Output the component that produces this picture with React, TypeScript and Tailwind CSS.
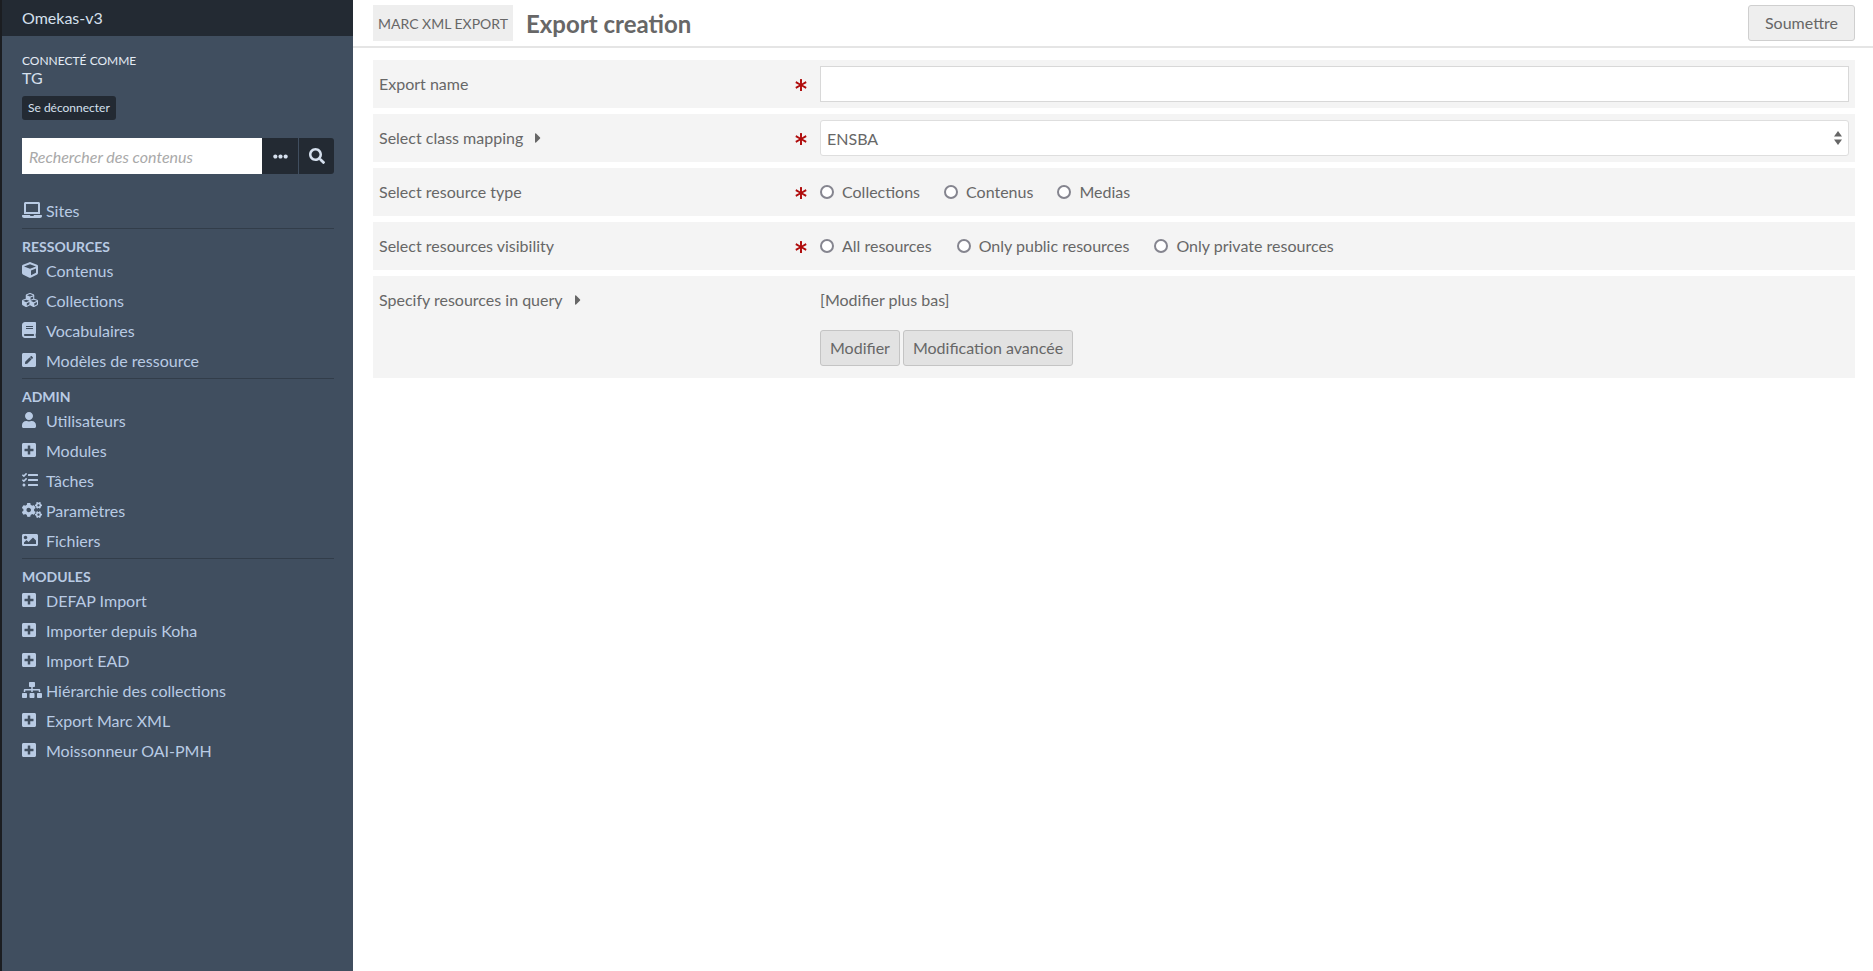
import type { ReactNode } from "react";
import type { IconType } from "react-icons";
import {
  FaAsterisk,
  FaBook,
  FaCaretRight,
  FaCogs,
  FaCube,
  FaCubes,
  FaEllipsisH,
  FaImage,
  FaLaptop,
  FaPenSquare,
  FaPlusSquare,
  FaSearch,
  FaSitemap,
  FaTasks,
  FaUser,
} from "react-icons/fa";

type NavItem = { label: string; icon: IconType; width: string };

const resources: NavItem[] = [
  { label: "Contenus", icon: FaCube, width: "w-4" },
  { label: "Collections", icon: FaCubes, width: "w-4" },
  { label: "Vocabulaires", icon: FaBook, width: "w-[14px]" },
  { label: "Modèles de ressource", icon: FaPenSquare, width: "w-[14px]" },
];

const admin: NavItem[] = [
  { label: "Utilisateurs", icon: FaUser, width: "w-[14px]" },
  { label: "Modules", icon: FaPlusSquare, width: "w-[14px]" },
  { label: "Tâches", icon: FaTasks, width: "w-4" },
  { label: "Paramètres", icon: FaCogs, width: "w-5" },
  { label: "Fichiers", icon: FaImage, width: "w-4" },
];

const modules: NavItem[] = [
  { label: "DEFAP Import", icon: FaPlusSquare, width: "w-[14px]" },
  { label: "Importer depuis Koha", icon: FaPlusSquare, width: "w-[14px]" },
  { label: "Import EAD", icon: FaPlusSquare, width: "w-[14px]" },
  { label: "Hiérarchie des collections", icon: FaSitemap, width: "w-5" },
  { label: "Export Marc XML", icon: FaPlusSquare, width: "w-[14px]" },
  { label: "Moissonneur OAI-PMH", icon: FaPlusSquare, width: "w-[14px]" },
];

function NavRow({ item }: { item: NavItem }) {
  const Icon = item.icon;
  return (
    <a className="flex h-[30px] items-center text-[#b9cbe4]">
      <span className="flex w-6 shrink-0 items-center">
        <Icon className={`h-4 ${item.width}`} />
      </span>
      <span className="pt-px">{item.label}</span>
    </a>
  );
}

function NavSection({ title, items }: { title: string; items: NavItem[] }) {
  return (
    <div className="border-t border-[#323d4a] pt-[6px] pb-[3px]">
      <h4 className="h-5 text-[14px] font-bold leading-[24px] text-[#b9cbe4]">{title}</h4>
      {items.map((item) => (
        <NavRow key={item.label} item={item} />
      ))}
    </div>
  );
}

function Sidebar() {
  return (
    <aside className="flex h-full w-[353px] shrink-0 flex-col border-l-2 border-[#1b1d21] bg-[#404e5f]">
      <div className="flex h-9 shrink-0 items-center bg-[#232a33] pl-5 text-[#d6e0ee]">Omekas-v3</div>
      <div className="px-5">
        <div className="pt-[18px] text-[12px] leading-[14px] text-[#e4ebf5]">CONNECTÉ COMME</div>
        <div className="h-[21px] text-[16px] leading-[20px] text-[#d6e0ee]">TG</div>
        <a className="mt-[7px] inline-flex h-6 items-center rounded-[3px] bg-[#232a33] px-[6px] align-top text-[12px] text-[#d6e0ee]">
          Se déconnecter
        </a>
        <div className="mt-[18px] flex h-9 w-[312px]">
          <input
            readOnly
            placeholder="Rechercher des contenus"
            className="h-9 w-[240px] bg-white px-[7px] text-[16px] italic outline-none placeholder:text-[#a9a9a9]"
          />
          <button className="flex h-9 w-9 items-center justify-center bg-[#232a33] text-[#d6e0ee]">
            <FaEllipsisH size={15} />
          </button>
          <button className="ml-px flex h-9 w-[35px] items-center justify-center rounded-r-[3px] bg-[#232a33] text-[#d6e0ee]">
            <FaSearch size={16} />
          </button>
        </div>
        <nav className="mt-[21px] w-[312px]">
          <div className="pb-[3px]">
            <NavRow item={{ label: "Sites", icon: FaLaptop, width: "w-5" }} />
          </div>
          <NavSection title="RESSOURCES" items={resources} />
          <NavSection title="ADMIN" items={admin} />
          <NavSection title="MODULES" items={modules} />
        </nav>
      </div>
    </aside>
  );
}

function FormRow({
  label,
  caret,
  required,
  tall,
  children,
}: {
  label: string;
  caret?: boolean;
  required?: boolean;
  tall?: boolean;
  children: ReactNode;
}) {
  return (
    <div className={`flex bg-[#f4f4f4] pl-[6px] pr-[6px] ${tall ? "pt-[6px] pb-3" : "h-12 items-center"}`}>
      <div className={`flex w-[416px] shrink-0 items-center ${tall ? "h-9" : ""}`}>
        <label>{label}</label>
        {caret && (
          <span className="ml-3 text-[#676767]">
            <FaCaretRight className="h-4 w-[6px]" />
          </span>
        )}
      </div>
      <div className={`flex w-[25px] shrink-0 text-[#b00c0c] ${tall ? "h-9 items-center" : ""}`}>
        {required && <FaAsterisk size={12} className="mt-[2px]" />}
      </div>
      <div className="min-w-0 flex-1">{children}</div>
    </div>
  );
}

function Radio({ label, gap }: { label: string; gap: string }) {
  return (
    <label className={`flex items-center ${gap}`}>
      <span className="mr-2 h-[14px] w-[14px] rounded-full border-2 border-[#85858f] bg-white" />
      {label}
    </label>
  );
}

export default function App() {
  return (
    <div className="flex h-[971px] w-[1873px] overflow-hidden bg-white font-['Lato',sans-serif] text-[16px] text-[#676767]">
      <Sidebar />
      <main className="min-w-0 flex-1">
        <header className="flex h-[48px] items-center border-b-2 border-[#e5e5e5] pl-5 pr-[18px]">
          <div className="flex h-9 w-[140px] items-center justify-center bg-[#eeeeee] text-[14px]">MARC XML EXPORT</div>
          <h1 className="ml-[13px] mt-px text-[24px] font-bold">Export creation</h1>
          <button className="ml-auto h-9 w-[107px] rounded-[3px] border border-[#cfcfcf] bg-[#eeeeee]">Soumettre</button>
        </header>
        <div className="flex w-[1502px] flex-col gap-[6px] pl-5 pt-3">
          <FormRow label="Export name" required>
            <input readOnly className="block h-9 w-full border border-[#d8d8d8] bg-white px-[6px] outline-none" />
          </FormRow>
          <FormRow label="Select class mapping" caret required>
            <div className="relative flex h-9 items-center rounded-[3px] border border-[#dedede] bg-white px-[6px] pt-[2px]">
              ENSBA
              <svg className="absolute right-[6px] top-[10px]" width="8" height="14" viewBox="0 0 8 14" fill="#666666">
                <path d="M4 0 8 5.500H0z" />
                <path d="M0 8.500h8L4 14z" />
              </svg>
            </div>
          </FormRow>
          <FormRow label="Select resource type" required>
            <div className="flex">
              <Radio label="Collections" gap="mr-6" />
              <Radio label="Contenus" gap="mr-6" />
              <Radio label="Medias" gap="" />
            </div>
          </FormRow>
          <FormRow label="Select resources visibility" required>
            <div className="flex">
              <Radio label="All resources" gap="mr-[25px]" />
              <Radio label="Only public resources" gap="mr-[25px]" />
              <Radio label="Only private resources" gap="" />
            </div>
          </FormRow>
          <FormRow label="Specify resources in query" caret tall>
            <div className="flex h-9 items-center">[Modifier plus bas]</div>
            <div className="mt-3 flex gap-[3px]">
              <button className="h-9 rounded-[3px] border border-[#c4c4c4] bg-[#e2e2e2] px-[9px]">Modifier</button>
              <button className="h-9 rounded-[3px] border border-[#c4c4c4] bg-[#e2e2e2] px-[9px]">Modification avancée</button>
            </div>
          </FormRow>
        </div>
      </main>
    </div>
  );
}
